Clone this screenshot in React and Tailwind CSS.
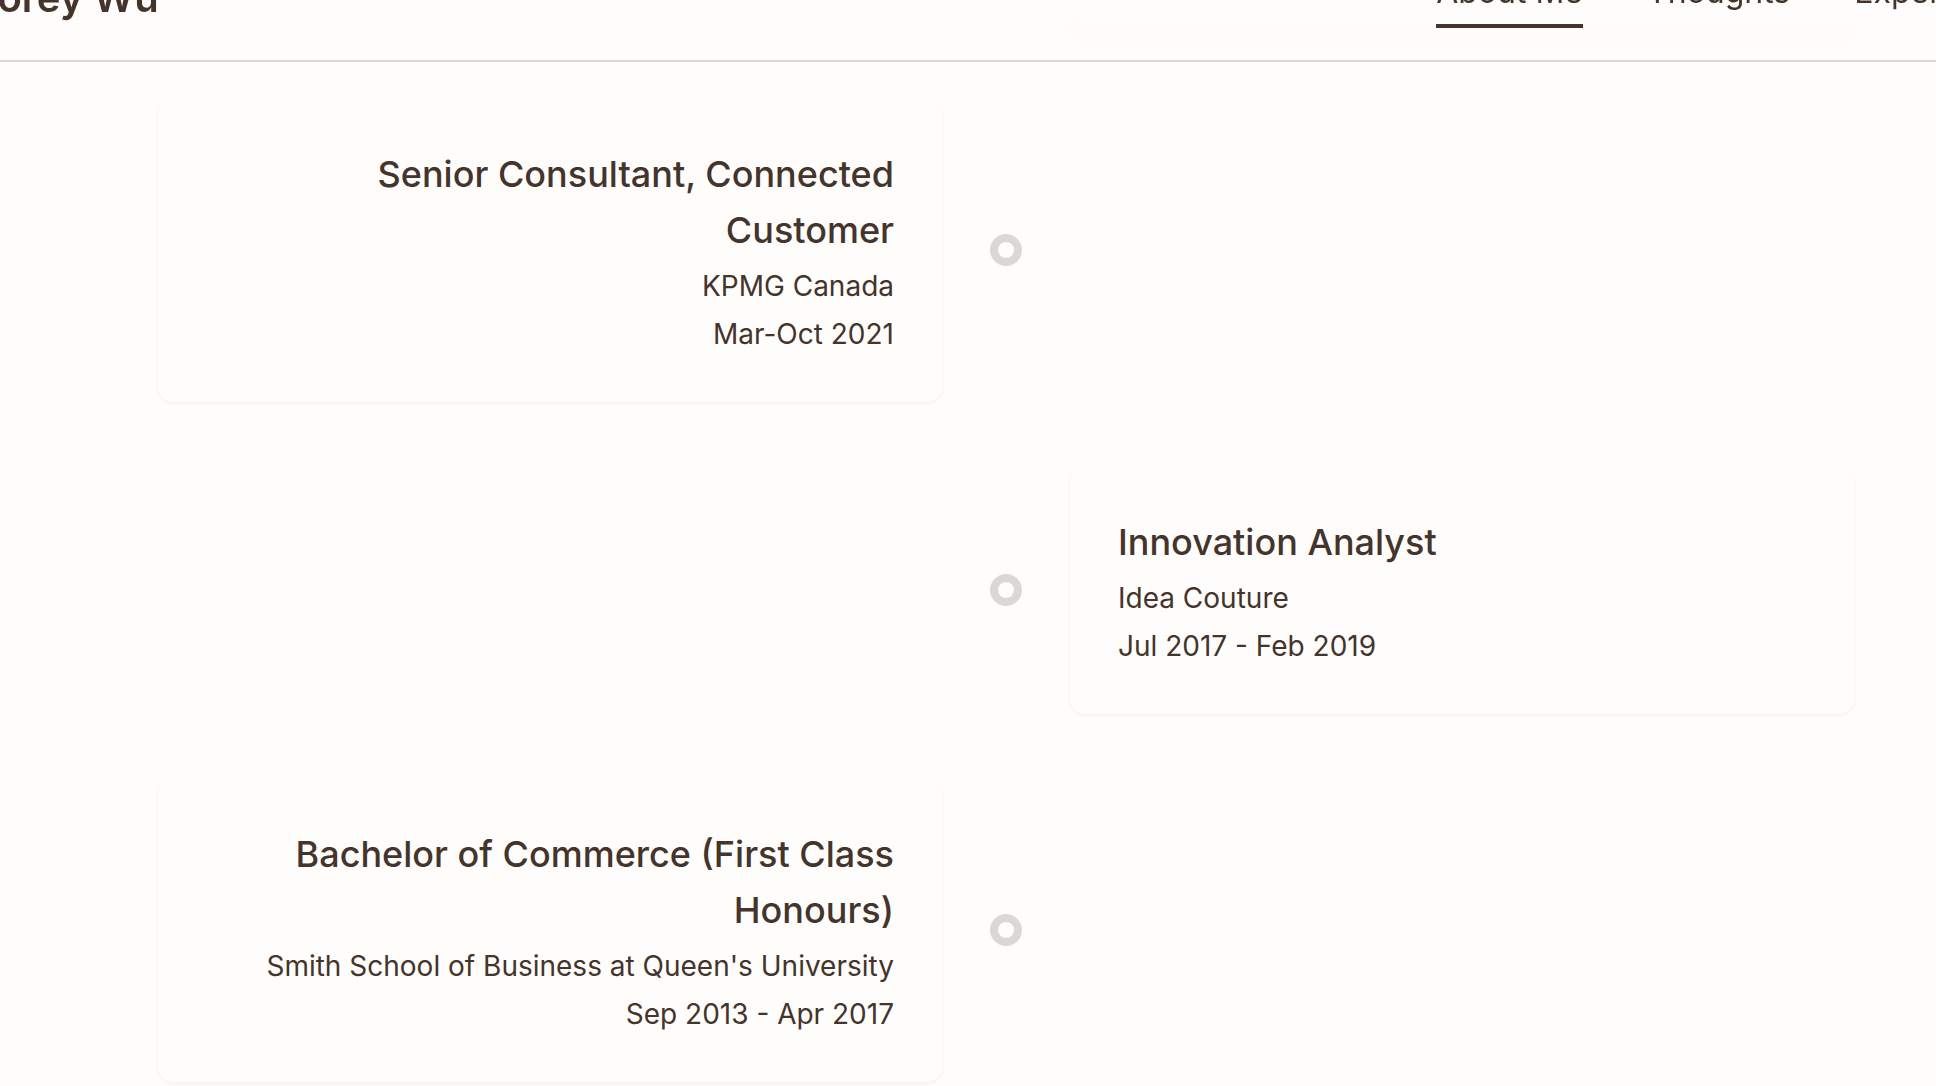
import React from "react";

const links = [
  { label: "About Me", href: "#about", active: true },
  { label: "Thoughts", href: "#thoughts", active: false },
  { label: "Experience", href: "#experience", active: false },
];

const entries = [
  {
    title: "Senior Consultant, Connected Customer",
    place: "KPMG Canada",
    dates: "Mar-Oct 2021",
    side: "left",
  },
  {
    title: "Innovation Analyst",
    place: "Idea Couture",
    dates: "Jul 2017 - Feb 2019",
    side: "right",
  },
  {
    title: "Bachelor of Commerce (First Class Honours)",
    place: "Smith School of Business at Queen's University",
    dates: "Sep 2013 - Apr 2017",
    side: "left",
  },
];

function Header() {
  return (
    <header className="sticky top-0 z-10 flex h-[62px] items-end justify-between overflow-hidden border-b-2 border-[#d9d8d3] bg-[#fffdfc]/40 pb-8 backdrop-blur-sm">
      <a href="#home" className="-ml-8 shrink-0 pb-2.5 text-[40px] leading-10 font-semibold">
        Corey Wu
      </a>
      <nav className="-mr-22 flex shrink-0 gap-16">
        {links.map((link) => (
          <a
            key={link.label}
            href={link.href}
            className={
              link.active
                ? "border-b-4 border-[#44342b] pb-2 text-[32px] leading-[48px]"
                : "border-b-4 border-transparent pb-2 text-[32px] leading-[48px]"
            }
          >
            {link.label}
          </a>
        ))}
      </nav>
    </header>
  );
}

function Entry({ entry }) {
  const left = entry.side === "left";
  return (
    <li className="grid grid-cols-[1fr_32px_1fr] items-center gap-12">
      <article
        className={
          left
            ? "col-start-1 row-start-1 rounded-2xl px-12 pt-12 pb-11 text-right shadow-[0_2px_4px_rgba(0,0,0,0.05)]"
            : "col-start-3 row-start-1 rounded-2xl px-12 pt-12 pb-11 text-left shadow-[0_2px_4px_rgba(0,0,0,0.05)]"
        }
      >
        <h3 className="mb-1 text-4xl leading-[56px] font-medium">{entry.title}</h3>
        <p className="text-[28px] leading-[48px]">{entry.place}</p>
        <p className="text-[28px] leading-[48px]">{entry.dates}</p>
      </article>
      <span className="col-start-2 row-start-1 size-8 rounded-full border-8 border-[#d9d8d3]" />
    </li>
  );
}

export default function App() {
  return (
    <div className="min-h-screen overflow-hidden bg-[#fffdfc] font-['Inter',sans-serif] text-[#44342b]">
      <Header />
      <main className="-mt-[62px] pr-[82px] pb-1 pl-[158px]">
        <ol className="flex flex-col gap-16">
          <li aria-hidden="true" className="grid grid-cols-[1fr_32px_1fr] gap-12">
            <div className="col-start-3 h-[34px] rounded-b-2xl shadow-[0_2px_4px_rgba(0,0,0,0.05)]" />
          </li>
          {entries.map((entry) => (
            <Entry key={entry.title} entry={entry} />
          ))}
        </ol>
      </main>
    </div>
  );
}
